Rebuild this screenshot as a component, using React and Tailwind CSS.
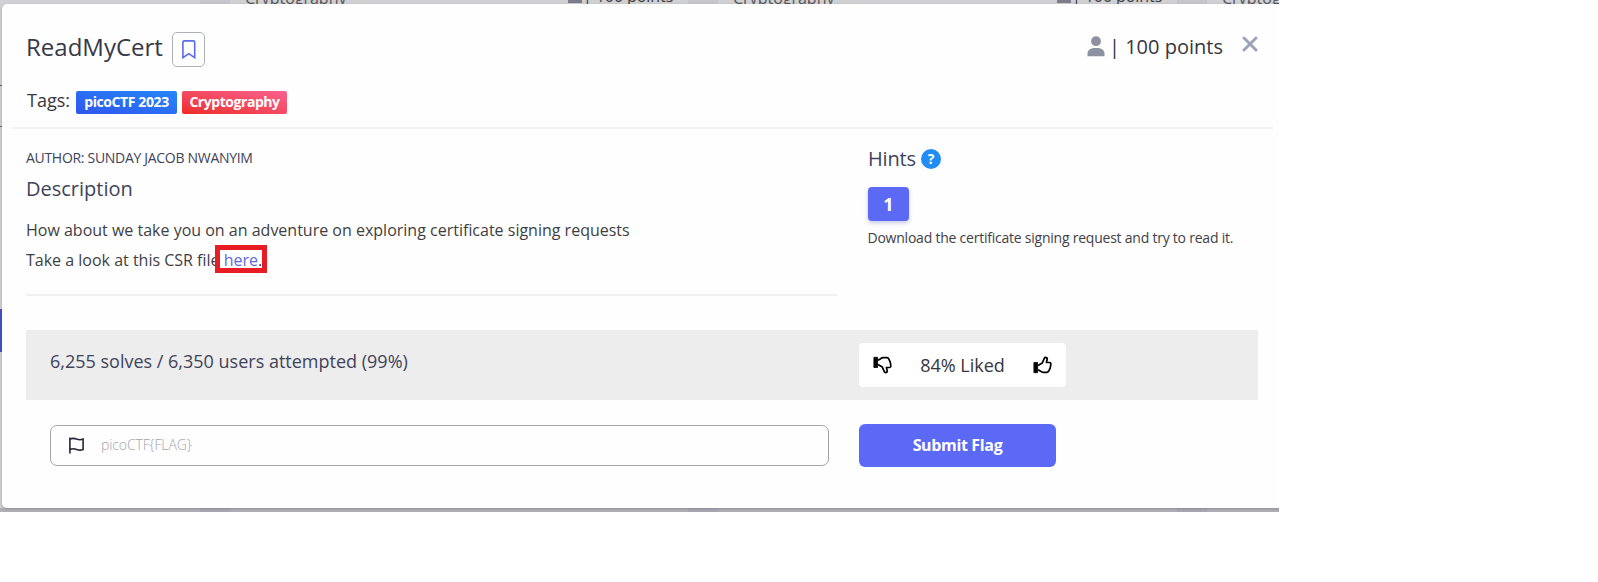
import React from "react";

function Backdrop() {
  return (
    <div className="absolute inset-0 text-[16px] leading-[20px] text-[#55555c]">
      <div className="absolute left-0 top-[85px] h-px w-[2px] bg-[#66666a]" />
      <div className="absolute left-0 top-[126px] h-px w-[2px] bg-[#66666a]" />
      <div className="absolute left-0 top-[309px] h-[43px] w-[2px] bg-[#444fc0]" />
      {[200, 688, 1177].map((x) => (
        <React.Fragment key={x}>
          <div className="absolute top-0 h-[512px] w-[30px] bg-[#c6c6ce]" style={{ left: x }} />
          <span className="absolute top-[-12px]" style={{ left: x + 45 }}>Cryptography</span>
        </React.Fragment>
      ))}
      {[568, 1057].map((x) => (
        <React.Fragment key={x}>
          <div className="absolute top-0 h-[3px] w-[14px] bg-[#7b7e8a]" style={{ left: x }} />
          <span className="absolute top-[-14px] whitespace-nowrap tracking-[-0.080px] text-[#3a3a40]" style={{ left: x + 15 }}>
            | 100 points
          </span>
        </React.Fragment>
      ))}
      <div className="absolute left-0 top-[508px] h-1 w-full bg-[#8a8694]/45" />
    </div>
  );
}

function Header() {
  return (
    <header className="ml-[9px] h-[125px] w-[1262px] border-b-2 border-[#f3f3f4] pl-[15px] pr-[15px]">
      <div className="flex h-[84px] justify-between pt-7">
        <div className="flex items-start">
          <h1 className="mt-[-1px] w-[146px] whitespace-nowrap text-[24px] leading-[32px] text-[#363848]">ReadMyCert</h1>
          <button className="flex h-[35px] w-[33px] items-center justify-center rounded-[5px] border border-[#aeb1b5]">
            <svg width="14" height="19" viewBox="0 0 14 19" fill="none" stroke="#5b69ea" strokeWidth="1.600">
              <path d="M.9 17.700V2.200Q.9.900 2.200.9h9.200q1.300 0 1.300 1.300v15.500L6.800 13.700z" />
            </svg>
          </button>
        </div>
        <div className="flex items-start">
          <svg className="ml-[-2px] mt-1" width="18" height="21" viewBox="0 0 18 21" fill="#8d92a1">
            <circle cx="9" cy="5.200" r="4.900" />
            <path d="M.5 20.200v-2.400C.5 14 3.600 12 9 12s8.500 2 8.500 5.800v2.400z" />
          </svg>
          <span className="ml-[4px] mt-px w-[116px] whitespace-nowrap text-[20px] leading-[28px] text-[#36363c]">| 100 points</span>
          <svg className="ml-[17px] mt-[4px]" width="16" height="16" viewBox="0 0 16 16" stroke="#9ca2ba" strokeWidth="2.900" strokeLinecap="round">
            <path d="M2 2l12 12M14 2L2 14" />
          </svg>
        </div>
      </div>
      <div className="flex h-[28px] items-start">
        <span className="w-[50px] whitespace-nowrap pl-px text-[18px] leading-[25px] text-[#36363c]">Tags:</span>
        <span className="mt-[3px] flex h-[23px] w-[101px] items-center justify-center rounded-[2px] bg-linear-to-tr from-[#2f55ee] to-[#2386fa] pb-[2px] text-[14px] font-bold tracking-[-0.400px] text-white">picoCTF 2023</span>
        <span className="ml-[5px] mt-[3px] flex h-[23px] w-[105px] items-center justify-center rounded-[2px] bg-linear-to-tr from-[#ee2a22] to-[#f9608e] pb-[2px] text-[14px] font-bold tracking-[-0.450px] text-white">Cryptography</span>
      </div>
    </header>
  );
}

function Thumb({ down }) {
  return (
    <svg className={down ? "-scale-y-100" : ""} width="19" height="18" viewBox="0 0 19 18" fill="none" stroke="#000" strokeWidth="1.700" strokeLinejoin="round">
      <path d="M.9 6.500h3.700v10.200H.9z" fill="#000" strokeWidth=".8" />
      <path d="M5 9.400 9.300 6.900 11.300 2.300Q11.900 1.100 13.200 1.600 14.700 2.200 14.100 3.800L13.400 6.500H16.600Q18.100 6.800 17.800 8.300L17.300 11.600 16 14.700Q15.300 16.200 13.800 16.300H10.300Q8.800 16.200 7.700 15.300L5 13.700" />
    </svg>
  );
}

function Details() {
  return (
    <div className="flex">
      <section className="h-[167px] w-[811px] border-b-2 border-[#f0f0f1] pt-[18px]">
        <p className="text-[14px] leading-[22px] tracking-[-0.300px] text-[#41435a]">AUTHOR: SUNDAY JACOB NWANYIM</p>
        <h2 className="mt-[6px] text-[20px] leading-[28px] text-[#41435a]">Description</h2>
        <div className="mt-[12px] text-[16px] leading-[30px] text-[#3f3f43]">
          <p>How about we take you on an adventure on exploring certificate signing requests</p>
          <p className="relative">
            Take a look at this CSR file <a className="text-[#606bdc]">here</a>.
            <span className="absolute left-[189px] top-0 h-[28px] w-[52px] border-[5px] border-[#e71c25]" />
          </p>
        </div>
      </section>
      <section className="ml-[31px] pt-[16px]">
        <div className="flex h-[28px] items-center">
          <h2 className="w-[53px] text-[20px] leading-[28px] tracking-[-0.150px] text-[#41435a]">Hints</h2>
          <span className="mb-px flex size-[20px] items-center justify-center rounded-full bg-[#228cf5] text-[14px] font-bold leading-none text-white">?</span>
        </div>
        <button className="mt-[14px] flex h-[34px] w-[41px] items-center justify-center rounded-[4px] bg-[#5b69f5] text-[18px] font-bold text-white shadow-[0_2px_4px_rgba(70,80,170,0.3)]">1</button>
        <p className="ml-[-0.5px] mt-[7px] text-[14px] leading-[20px] tracking-[-0.230px] text-[#414146]">Download the certificate signing request and try to read it.</p>
      </section>
    </div>
  );
}

export default function App() {
  return (
    <div className="h-[582px] w-[1598px] bg-white font-['Open_Sans',sans-serif]">
      <div className="relative h-[512px] w-[1279px] overflow-hidden bg-[#d1d1d3] pl-[2px] pt-[4px]">
        <Backdrop />
        <main className="relative h-[504px] w-[1290px] rounded-[5px] bg-[#fefefe] shadow-[0_1px_3px_rgba(60,60,75,0.3)]">
          <Header />
          <div className="pl-[24px]">
            <Details />
            <section className="mt-[34px] flex h-[70px] w-[1232px] bg-[#ededed] pl-[24px] pt-[13px]">
              <p className="w-[809px] text-[18px] leading-[36px] text-[#41435a]">6,255 solves / 6,350 users attempted (99%)</p>
              <div className="flex h-[44px] w-[207px] items-center justify-between rounded-[4px] bg-white px-[14px]">
                <Thumb down />
                <span className="text-[18px] text-[#36363c]">84% Liked</span>
                <Thumb />
              </div>
            </section>
            <form className="ml-[24px] mt-[24px] flex">
              <label className="mt-px flex h-[41px] w-[779px] items-center rounded-[7px] border border-[#a4a4aa] pl-[18px]">
                <svg width="15" height="17" viewBox="0 0 15 17" fill="none" stroke="#24263c" strokeWidth="1.600">
                  <path d="M.9.5v16M.9 2.200c2.500-1.200 4.500-1 6.600-.1 2.300.9 4.200 1 6.600 0v10.300c-2.300 1-4.300.9-6.600 0-2.200-.9-4.200-1-6.600.1" />
                </svg>
                <span className="ml-[17px] pb-[2px] text-[14px] font-light tracking-[-0.120px] text-[#a3a3a8]">picoCTF{"{FLAG}"}</span>
              </label>
              <button type="button" className="ml-[30px] flex h-[43px] w-[197px] items-center justify-center rounded-[6px] bg-[#5b69f5] pb-px text-[16px] font-bold tracking-[-0.350px] text-white">Submit Flag</button>
            </form>
          </div>
        </main>
      </div>
    </div>
  );
}
